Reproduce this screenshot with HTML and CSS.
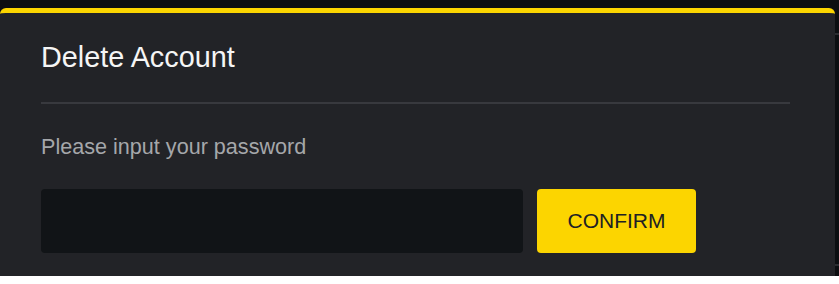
FILE: index.html
```html
<!DOCTYPE html>
<html lang="en">
<head>
<meta charset="utf-8">
<title>Delete Account</title>
<link rel="stylesheet" href="styles.css">
</head>
<body>
<div class="backdrop">
  <div class="modal">
    <h2 class="modal-title">Delete Account</h2>
    <div class="divider"></div>
    <p class="modal-label">Please input your password</p>
    <div class="form-row">
      <input class="password-input" type="password" aria-label="Password">
      <button class="confirm-btn" type="button">CONFIRM</button>
    </div>
  </div>
  <div class="side-strip"></div>
</div>
</body>
</html>
```
FILE: styles.css
```css
html, body {
  margin: 0;
  padding: 0;
  background: #ffffff;
}
body {
  font-family: "Liberation Sans", Arial, sans-serif;
}
.backdrop {
  height: 276px;
  background: #0c0e11;
  display: flex;
  align-items: flex-start;
}
.modal {
  width: 835px;
  height: 268px;
  margin-top: 8px;
  flex: none;
  box-sizing: border-box;
  background: #222327;
  border-top: 5px solid #fcd500;
  border-radius: 6px 6px 0 0;
  padding: 28px 45px 23px 41px;
}
.side-strip {
  flex: 1;
  height: 276px;
  background:
    linear-gradient(#2a2c30, #2a2c30) 0 33px / 100% 2px no-repeat,
    linear-gradient(#2a2c30, #2a2c30) 0 264px / 100% 2px no-repeat,
    #0c0e11;
}
.modal-title {
  margin: 0;
  font-size: 28.8px;
  line-height: 33px;
  font-weight: 400;
  color: #f5f5f5;
}
.divider {
  height: 2px;
  background: #38393e;
  margin-top: 28px;
}
.modal-label {
  margin: 29.5px 0 0;
  font-size: 21.6px;
  line-height: 25px;
  color: #a5a7aa;
}
.form-row {
  display: flex;
  gap: 14px;
  margin-top: 30.5px;
}
.password-input {
  width: 482px;
  height: 64px;
  box-sizing: border-box;
  background: #111417;
  border: none;
  border-radius: 4px;
  outline: none;
  color: #eaecef;
  font-size: 18px;
  padding: 0 16px;
}
.confirm-btn {
  width: 159px;
  height: 64px;
  border: none;
  border-radius: 4px;
  background: #fcd500;
  color: #202124;
  font-family: "Liberation Sans", Arial, sans-serif;
  font-size: 21px;
  padding: 0;
  cursor: pointer;
}
```
